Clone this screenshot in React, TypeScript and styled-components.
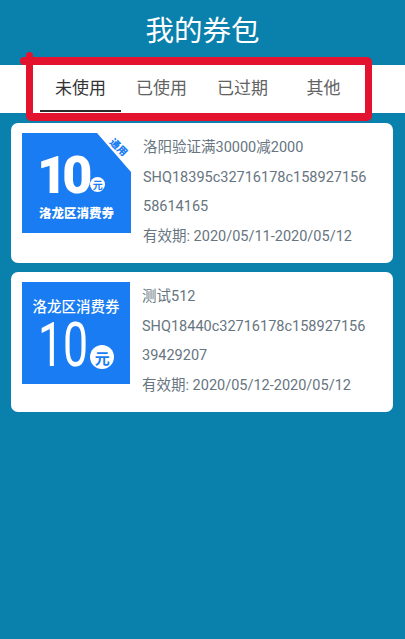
import React from 'react';
import styled, { createGlobalStyle } from 'styled-components';

const PAGE_BLUE = '#0a80ad';
const COUPON_BLUE = '#1a7cf2';
const TEXT_GRAY = '#67757f';

const tabs = ['未使用', '已使用', '已过期', '其他'];

type Coupon = {
  id: string;
  kind: 'general' | 'plain';
  title: string;
  code: string;
  period: string;
};

const coupons: Coupon[] = [
  {
    id: 'c1',
    kind: 'general',
    title: '洛阳验证满30000减2000',
    code: 'SHQ18395c32716178c15892715658614165',
    period: '有效期: 2020/05/11-2020/05/12',
  },
  {
    id: 'c2',
    kind: 'plain',
    title: '测试512',
    code: 'SHQ18440c32716178c15892715639429207',
    period: '有效期: 2020/05/12-2020/05/12',
  },
];

const GeneralArt: React.FC = () => (
  <StArtWrap>
    <StArtCut>
      <StArtRow1>
        <StBigNum1>10</StBigNum1>
        <StYuan $size={15} $font={10} $left={3} $bottom={6}>
          元
        </StYuan>
      </StArtRow1>
      <StArtLabel1>洛龙区消费券</StArtLabel1>
    </StArtCut>
    <StTag>通用</StTag>
  </StArtWrap>
);

const PlainArt: React.FC = () => (
  <StArtPlain>
    <StArtLabel2>洛龙区消费券</StArtLabel2>
    <StArtRow2>
      <StBigNum2>10</StBigNum2>
      <StYuan $size={24} $font={15} $left={3} $bottom={7}>
        元
      </StYuan>
    </StArtRow2>
  </StArtPlain>
);

const App: React.FC = () => {
  const activeTab = 0;

  return (
    <>
      <GlobalStyle />
      <StPage>
        <StHeader>
          <StTitle>我的券包</StTitle>
        </StHeader>
        <StTabBarWrap>
          <StTabBar>
            {tabs.map((tab, index) => (
              <StTab key={tab} $active={index === activeTab}>
                {tab}
              </StTab>
            ))}
          </StTabBar>
          <StMarker />
        </StTabBarWrap>
        <StList>
          {coupons.map((coupon) => (
            <StCard key={coupon.id}>
              {coupon.kind === 'general' ? <GeneralArt /> : <PlainArt />}
              <StInfo>
                <StLine>{coupon.title}</StLine>
                <StLine>{coupon.code}</StLine>
                <StLine>{coupon.period}</StLine>
              </StInfo>
            </StCard>
          ))}
        </StList>
      </StPage>
    </>
  );
};

export default App;

const GlobalStyle = createGlobalStyle`
  html, body {
    margin: 0;
    padding: 0;
    background: ${PAGE_BLUE};
  }
  * {
    box-sizing: border-box;
  }
  body {
    font-family: Roboto, "Noto Sans CJK SC", sans-serif;
  }
`;

const StPage = styled.div`
  min-height: 639px;
  background: ${PAGE_BLUE};
`;

const StHeader = styled.header`
  display: flex;
  align-items: center;
  justify-content: center;
  height: 65px;
  padding-bottom: 7px;
`;

const StTitle = styled.h1`
  margin: 0;
  font-size: 28.5px;
  font-weight: 400;
  line-height: 36px;
  color: #ffffff;
  font-family: "Noto Sans CJK SC", sans-serif;
`;

const StTabBarWrap = styled.div`
  position: relative;
`;

const StTabBar = styled.nav`
  display: grid;
  grid-template-columns: repeat(4, 1fr);
  height: 48px;
  padding: 0 41px 1px 40px;
  background: #ffffff;
`;

const StTab = styled.div<{ $active?: boolean }>`
  display: flex;
  align-items: center;
  justify-content: center;
  padding-bottom: 2px;
  font-size: 17px;
  font-family: "Noto Sans CJK SC", sans-serif;
  color: ${({ $active }) => ($active ? '#333333' : '#626262')};
  border-bottom: 2px solid ${({ $active }) => ($active ? '#2b2b2b' : 'transparent')};
`;

/* red annotation box drawn over the tabs */
const StMarker = styled.div`
  position: absolute;
  left: 26px;
  top: -8px;
  width: 346px;
  height: 64px;
  border: 7px solid #e3132f;
  border-top-width: 8px;
  border-bottom-width: 8px;
  border-radius: 5px;
  pointer-events: none;

  &::before {
    content: '';
    position: absolute;
    left: -13px;
    top: -8px;
    width: 14px;
    height: 8px;
    border-radius: 4px 0 0 4px;
    background: #e3132f;
  }
  &::after {
    content: '';
    position: absolute;
    left: -7px;
    top: -13px;
    width: 7px;
    height: 8px;
    border-radius: 4px 4px 0 0;
    background: #e3132f;
  }
`;

const StList = styled.section`
  display: flex;
  flex-direction: column;
  gap: 9px;
  padding: 10px 12px 0 11px;
`;

const StCard = styled.article`
  display: flex;
  gap: 12px;
  height: 140px;
  padding: 10px 11px 12px;
  background: #ffffff;
  border-radius: 7px;
`;

const StInfo = styled.div`
  flex: 1;
  min-width: 0;
  padding-right: 10px;
`;

const StLine = styled.p`
  margin: 0;
  font-size: 14.5px;
  line-height: 29.5px;
  color: ${TEXT_GRAY};
  word-break: break-all;
`;

const StArtWrap = styled.div`
  position: relative;
  flex: none;
  width: 109px;
  height: 100px;
`;

const StArtCut = styled.div`
  display: flex;
  flex-direction: column;
  width: 100%;
  height: 100%;
  padding-top: 21px;
  background: ${COUPON_BLUE};
  clip-path: polygon(0 0, 75px 0, 109px 39px, 109px 100%, 0 100%);
`;

const StArtRow1 = styled.div`
  display: flex;
  align-items: flex-end;
  padding-left: 15px;
`;

const StBigNum1 = styled.span`
  font-family: Roboto, sans-serif;
  font-size: 52px;
  font-weight: 900;
  line-height: 44px;
  letter-spacing: -5px;
  color: #ffffff;
`;

const StYuan = styled.span<{ $size: number; $font: number; $left: number; $bottom: number }>`
  display: flex;
  align-items: center;
  justify-content: center;
  flex: none;
  width: ${({ $size }) => $size}px;
  height: ${({ $size }) => $size}px;
  margin: 0 0 ${({ $bottom }) => $bottom}px ${({ $left }) => $left}px;
  border-radius: 50%;
  background: #ffffff;
  color: ${COUPON_BLUE};
  font-family: "Noto Sans CJK SC", sans-serif;
  font-size: ${({ $font }) => $font}px;
  font-weight: 700;
  line-height: 1;
`;

const StArtLabel1 = styled.div`
  margin-top: 7px;
  text-align: center;
  font-family: "Noto Sans CJK SC", sans-serif;
  font-size: 12.5px;
  font-weight: 900;
  line-height: 16px;
  color: #ffffff;
`;

const StTag = styled.span`
  position: absolute;
  left: 85px;
  top: 8px;
  width: 24px;
  text-align: center;
  transform: rotate(45deg);
  font-family: "Noto Sans CJK SC", sans-serif;
  font-size: 10px;
  font-weight: 900;
  line-height: 12px;
  color: ${COUPON_BLUE};
`;

const StArtPlain = styled.div`
  display: flex;
  flex-direction: column;
  align-items: center;
  flex: none;
  width: 108px;
  height: 102px;
  padding-top: 14px;
  background: ${COUPON_BLUE};
  overflow: hidden;
`;

const StArtLabel2 = styled.div`
  font-family: "Noto Sans CJK SC", sans-serif;
  font-size: 14.5px;
  font-weight: 500;
  line-height: 20px;
  color: #ffffff;
`;

const StArtRow2 = styled.div`
  display: flex;
  align-items: flex-end;
  margin-top: -2px;
`;

const StBigNum2 = styled.span`
  display: inline-block;
  margin-right: -20px;
  font-family: Roboto, sans-serif;
  font-size: 62px;
  font-weight: 400;
  line-height: 62px;
  color: #ffffff;
  transform: scaleX(0.72);
  transform-origin: left center;
`;
